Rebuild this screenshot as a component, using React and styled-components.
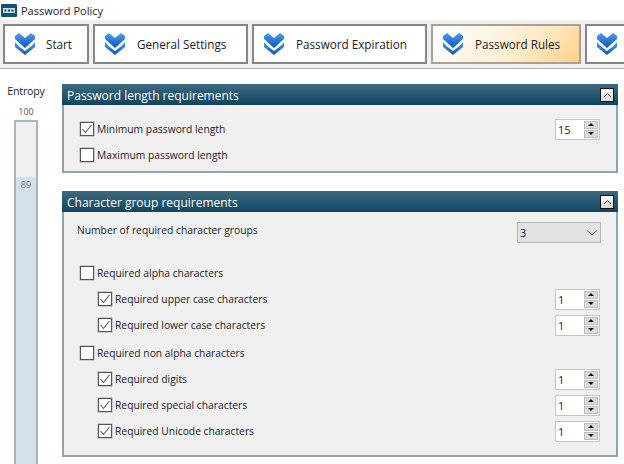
import React from "react";
import styled, { createGlobalStyle } from "styled-components";

const GlobalStyle = createGlobalStyle`
	html, body {
		margin: 0;
		padding: 0;
		background: #fff;
		overflow: hidden;
	}
	body {
		font-family: "Open Sans", "Liberation Sans", sans-serif;
		color: #1c1c2a;
	}
`;

const Page = styled.div`
	width: 624px;
	height: 464px;
	overflow: hidden;
	display: flex;
	flex-direction: column;
`;

const TitleBar = styled.div`
	height: 20px;
	display: flex;
	align-items: center;
	padding-left: 1px;
	gap: 4px;
	font-size: 11px;
	flex: none;
`;

const Toolbar = styled.div`
	height: 49px;
	flex: none;
	box-sizing: border-box;
	background: #f0f0f0;
	border-bottom: 1px solid #b0b0b0;
	display: flex;
	gap: 4px;
	padding: 4px 0 0 3px;
	overflow: hidden;
`;

const StepButton = styled.div`
	width: ${(p) => p.$width}px;
	height: 40px;
	flex: none;
	box-sizing: border-box;
	border: 2px solid ${(p) => (p.$active ? "#a8a296" : "#868686")};
	background: ${(p) => (p.$active ? "linear-gradient(135deg, #fff 8%, #ffeccb 60%, #fdd288 100%)" : "#fff")};
	display: flex;
	align-items: center;
	padding-left: 10px;
	font-size: 11.7px;
	font-weight: 500;
`;

const StepLabel = styled.span`
	margin-left: ${(p) => p.$gap}px;
	white-space: nowrap;
`;

const Content = styled.div`
	flex: 1;
	display: flex;
	min-height: 0;
`;

const EntropyColumn = styled.div`
	width: 52px;
	flex: none;
	display: flex;
	flex-direction: column;
	align-items: center;
`;

const EntropyTitle = styled.div`
	font-size: 10.6px;
	letter-spacing: -0.2px;
	margin-top: 14px;
	line-height: 16px;
`;

const EntropyMax = styled.div`
	font-size: 9px;
	color: #555;
	line-height: 12px;
	margin-top: 7px;
`;

const EntropyTrack = styled.div`
	width: 24px;
	margin-top: 2px;
	flex: 1;
	box-sizing: border-box;
	border: 2px solid #a3b5c0;
	border-bottom: none;
	background: #eef0f1;
	display: flex;
	flex-direction: column;
`;

const EntropyFill = styled.div`
	margin-top: 55px;
	flex: 1;
	background: #d4e1ea;
	text-align: center;
	font-size: 9.5px;
	line-height: 14px;
	padding-top: 1px;
	color: #6f8796;
`;

const Panels = styled.div`
	width: 556px;
	margin-left: 10px;
	padding-top: 15px;
	display: flex;
	flex-direction: column;
	gap: 18px;
`;

const Panel = styled.section`
	box-sizing: border-box;
	height: ${(p) => p.$height}px;
	border: 2px solid #8ea5b1;
	border-top: none;
	background: #f0f0f0;
	display: flex;
	flex-direction: column;
`;

const PanelHeader = styled.header`
	height: 21px;
	box-sizing: border-box;
	margin: 0 -2px;
	flex: none;
	background: linear-gradient(#3f6a80, #0f4560);
	color: #fff;
	font-size: 12px;
	display: flex;
	align-items: center;
	justify-content: space-between;
	padding: 0 4px 0 5px;
`;

const PanelName = styled.span`
	padding-top: 2px;
`;

const CollapseButton = styled.div`
	width: 14px;
	height: 14px;
	box-sizing: border-box;
	border: 1px solid #111;
	background: linear-gradient(#fff, #d8d8d8);
	display: flex;
	align-items: center;
	justify-content: center;
`;

const PanelBody = styled.div`
	padding: ${(p) => p.$top}px 16px 0 16px;
	display: flex;
	flex-direction: column;
`;

const Row = styled.div`
	height: 26px;
	flex: none;
	display: flex;
	align-items: center;
	justify-content: space-between;
	margin-top: ${(p) => p.$gap || 0}px;
	padding-left: ${(p) => (p.$nested ? 18 : 0)}px;
`;

const CheckLabel = styled.label`
	display: flex;
	align-items: center;
	gap: 3px;
	font-size: 10.3px;
	line-height: 13px;
	color: #23202e;
`;

const Box = styled.span`
	width: 14px;
	height: 14px;
	box-sizing: border-box;
	border: 1px solid #555;
	background: #fff;
	display: flex;
	align-items: center;
	justify-content: center;
	box-shadow: 0 0 0 0.5px #aaa;
`;

const Spinner = styled.div`
	width: 45px;
	height: 21px;
	box-sizing: border-box;
	border: 1px solid #c4c4c4;
	background: #fff;
	display: flex;
	align-items: center;
	justify-content: space-between;
	padding: 1px 1px 1px 2px;
	font-size: 11px;
`;

const SpinButtons = styled.div`
	width: 14px;
	height: 17px;
	display: flex;
	flex-direction: column;
	gap: 1px;
`;

const SpinButton = styled.div`
	flex: 1;
	background: #dcdcdc;
	border: 1px solid #bdbdbd;
	display: flex;
	align-items: center;
	justify-content: center;
`;

const Arrow = styled.span`
	width: 0;
	height: 0;
	border-left: 3.5px solid transparent;
	border-right: 3.5px solid transparent;
	${(p) => (p.$down ? "border-top: 3.5px solid #111;" : "border-bottom: 3.5px solid #111;")}
`;

const GroupRow = styled.div`
	height: 22px;
	display: flex;
	align-items: flex-start;
	justify-content: space-between;
	margin: 0 -1px 0 -3px;
	font-size: 10.3px;
	line-height: 17px;
	flex: none;
`;

const Select = styled.div`
	width: 84px;
	height: 21px;
	box-sizing: border-box;
	border: 1px solid #b4b4b4;
	background: #e3e3e3;
	display: flex;
	align-items: center;
	justify-content: space-between;
	padding: 0 3px 0 2px;
	font-size: 11px;
`;

function ChevronsIcon() {
	return (
		<svg width="20" height="22" viewBox="0 0 20 22">
			<defs>
				<linearGradient id="chev" x1="0" y1="0" x2="0" y2="1">
					<stop offset="0" stopColor="#4a9cf5" />
					<stop offset="1" stopColor="#0f55b8" />
				</linearGradient>
			</defs>
			<path d="M0 9 L3.5 13 L10 18 L16.5 13 L20 9 L20 14 L10 22 L0 14 Z" fill="url(#chev)" />
			<path d="M0 3 L4 0 L10 5 L16 0 L20 3 L20 6 L10 15 L0 6 Z" fill="url(#chev)" />
		</svg>
	);
}

function AppIcon() {
	return (
		<svg width="16" height="13" viewBox="0 0 16 13">
			<rect width="16" height="13" rx="1" fill="#17506b" />
			<rect x="2" y="4" width="12" height="5" fill="#bfe0ee" />
			<rect x="3.5" y="5.5" width="2" height="2" fill="#17506b" />
			<rect x="7" y="5.5" width="2" height="2" fill="#17506b" />
			<rect x="10.5" y="5.5" width="2" height="2" fill="#17506b" />
		</svg>
	);
}

function Check({ label, checked }) {
	return (
		<CheckLabel>
			<Box>
				{checked && (
					<svg width="12" height="12" viewBox="0 0 12 12">
						<path d="M1.5 6 L4.5 9.5 L10.5 2" fill="none" stroke="#555" strokeWidth="1.1" />
					</svg>
				)}
			</Box>
			{label}
		</CheckLabel>
	);
}

function NumberSpinner({ value }) {
	return (
		<Spinner>
			{value}
			<SpinButtons>
				<SpinButton><Arrow /></SpinButton>
				<SpinButton><Arrow $down /></SpinButton>
			</SpinButtons>
		</Spinner>
	);
}

function PanelTitle({ title }) {
	return (
		<PanelHeader>
			<PanelName>{title}</PanelName>
			<CollapseButton>
				<svg width="9" height="6" viewBox="0 0 9 6">
					<path d="M1 5 L4.5 1.5 L8 5" fill="none" stroke="#444" strokeWidth="1" />
				</svg>
			</CollapseButton>
		</PanelHeader>
	);
}

const steps = [
	{ label: "Start", width: 86, gap: 11 },
	{ label: "General Settings", width: 155, gap: 12 },
	{ label: "Password Expiration", width: 175, gap: 12 },
	{ label: "Password Rules", width: 150, gap: 12, active: true },
	{ label: "", width: 60, gap: 0 },
];

const characterRows = [
	{ label: "Required alpha characters", gap: 16 },
	{ label: "Required upper case characters", nested: true, checked: true, value: 1 },
	{ label: "Required lower case characters", nested: true, checked: true, value: 1 },
	{ label: "Required non alpha characters", gap: 2 },
	{ label: "Required digits", nested: true, checked: true, value: 1 },
	{ label: "Required special characters", nested: true, checked: true, value: 1 },
	{ label: "Required Unicode characters", nested: true, checked: true, value: 1 },
];

export default function App() {
	return (
		<Page>
			<GlobalStyle />
			<TitleBar>
				<AppIcon />
				Password Policy
			</TitleBar>
			<Toolbar>
				{steps.map((s, i) => (
					<StepButton key={i} $width={s.width} $active={s.active}>
						<ChevronsIcon />
						{s.label && <StepLabel $gap={s.gap}>{s.label}</StepLabel>}
					</StepButton>
				))}
			</Toolbar>
			<Content>
				<EntropyColumn>
					<EntropyTitle>Entropy</EntropyTitle>
					<EntropyMax>100</EntropyMax>
					<EntropyTrack>
						<EntropyFill>89</EntropyFill>
					</EntropyTrack>
				</EntropyColumn>
				<Panels>
					<Panel $height={89}>
						<PanelTitle title="Password length requirements" />
						<PanelBody $top={11}>
							<Row>
								<Check label="Minimum password length" checked />
								<NumberSpinner value={15} />
							</Row>
							<Row>
								<Check label="Maximum password length" />
							</Row>
						</PanelBody>
					</Panel>
					<Panel $height={266}>
						<PanelTitle title="Character group requirements" />
						<PanelBody $top={10}>
							<GroupRow>
								Number of required character groups
								<Select>
									3
									<svg width="10" height="6" viewBox="0 0 10 6">
										<path d="M0.5 0.5 L5 5 L9.5 0.5" fill="none" stroke="#666" strokeWidth="1" />
									</svg>
								</Select>
							</GroupRow>
							{characterRows.map((r) => (
								<Row key={r.label} $gap={r.gap} $nested={r.nested}>
									<Check label={r.label} checked={r.checked} />
									{r.value && <NumberSpinner value={r.value} />}
								</Row>
							))}
						</PanelBody>
					</Panel>
				</Panels>
			</Content>
		</Page>
	);
}
